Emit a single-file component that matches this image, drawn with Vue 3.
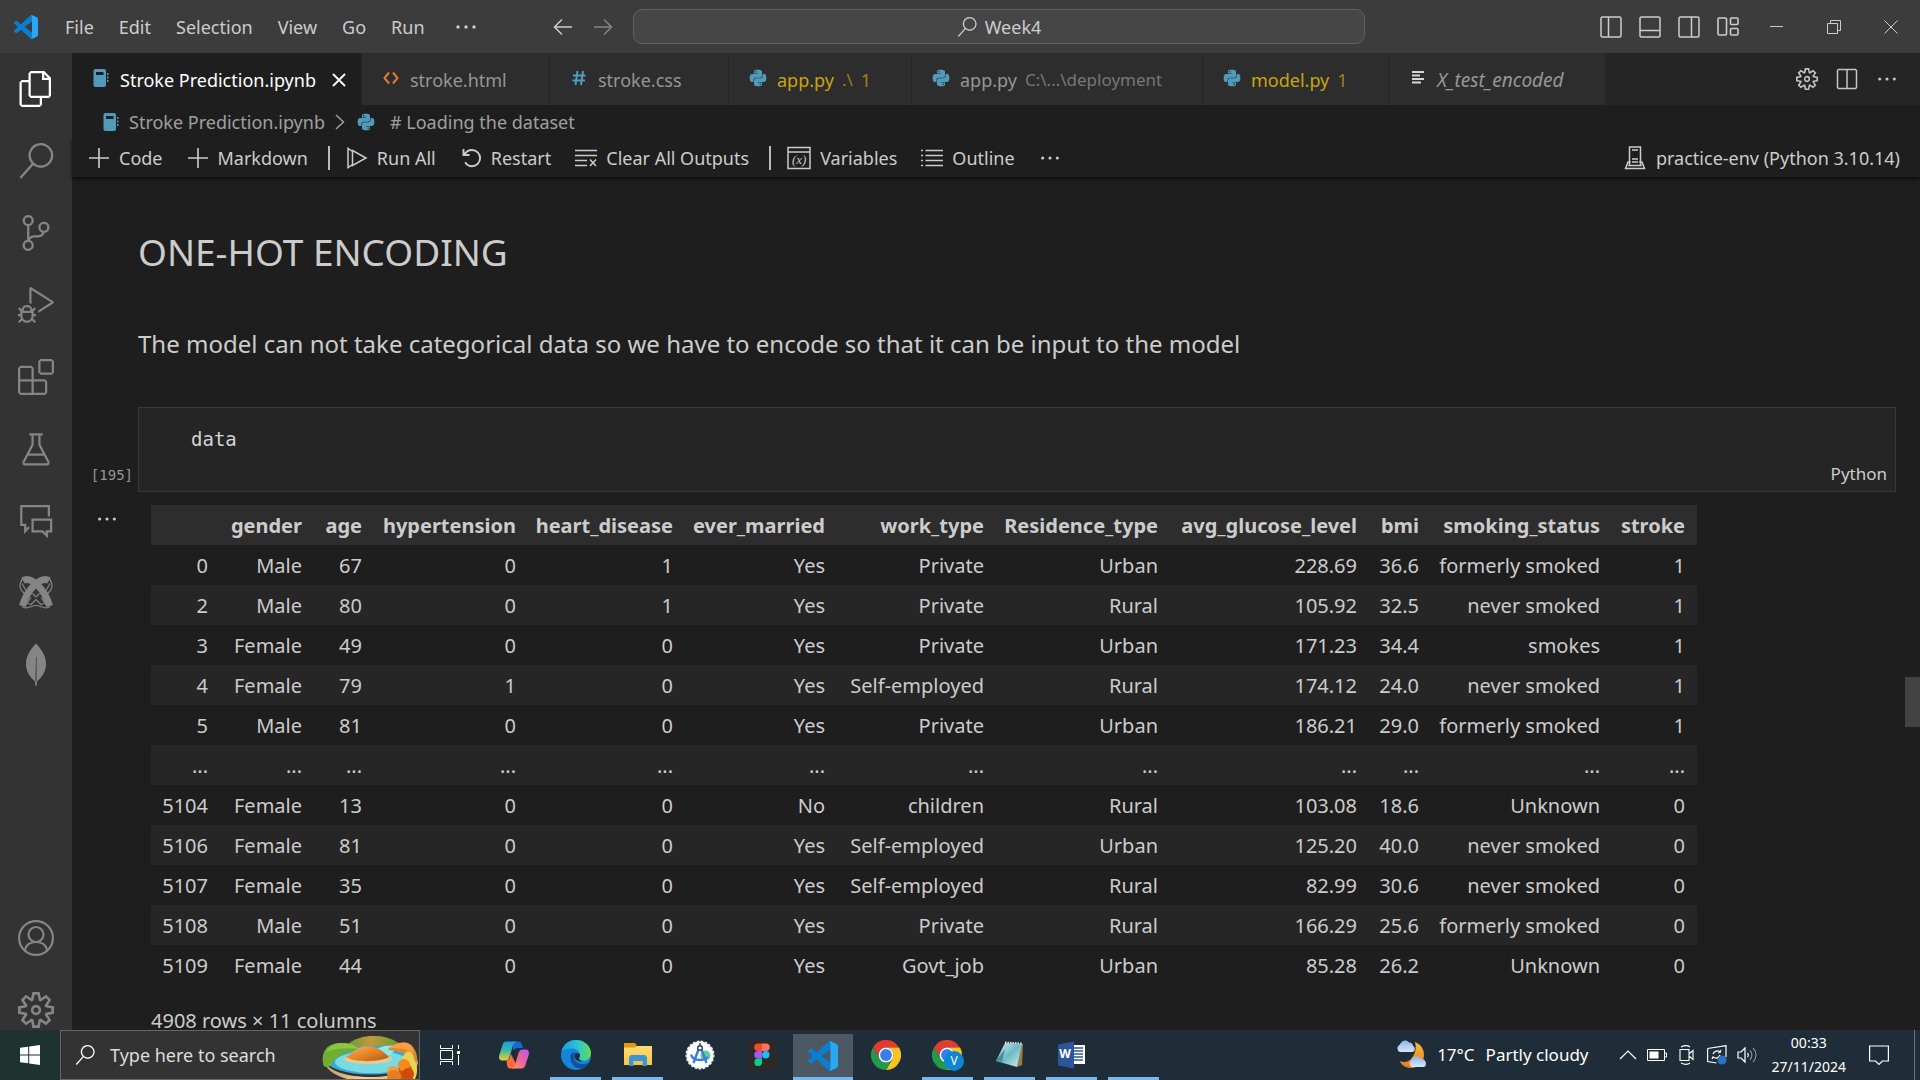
<script setup>
const menus = ['File', 'Edit', 'Selection', 'View', 'Go', 'Run']

const tabs = [
  { icon: 'notebook', name: 'Stroke Prediction.ipynb', kind: 'active' },
  { icon: 'html', name: 'stroke.html', kind: '' },
  { icon: 'css', name: 'stroke.css', kind: '' },
  { icon: 'python', name: 'app.py', note: '.\\', count: '1', kind: 'warn' },
  { icon: 'python', name: 'app.py', note: 'C:\\...\\deployment', kind: '' },
  { icon: 'python', name: 'model.py', count: '1', kind: 'warn' },
  { icon: 'lines', name: 'X_test_encoded', kind: 'preview' },
]

const activity = [
  ['files', 'Explorer'],
  ['search', 'Search'],
  ['scm', 'Source Control'],
  ['debug', 'Run and Debug'],
  ['extensions', 'Extensions'],
  ['flask', 'Testing'],
  ['chat', 'Comments'],
  ['ribbon', 'Ribbon'],
  ['leaf', 'MongoDB'],
]

const columns = ['', 'gender', 'age', 'hypertension', 'heart_disease', 'ever_married', 'work_type', 'Residence_type', 'avg_glucose_level', 'bmi', 'smoking_status', 'stroke']

const rows = [
  ['0', 'Male', '67', '0', '1', 'Yes', 'Private', 'Urban', '228.69', '36.6', 'formerly smoked', '1'],
  ['2', 'Male', '80', '0', '1', 'Yes', 'Private', 'Rural', '105.92', '32.5', 'never smoked', '1'],
  ['3', 'Female', '49', '0', '0', 'Yes', 'Private', 'Urban', '171.23', '34.4', 'smokes', '1'],
  ['4', 'Female', '79', '1', '0', 'Yes', 'Self-employed', 'Rural', '174.12', '24.0', 'never smoked', '1'],
  ['5', 'Male', '81', '0', '0', 'Yes', 'Private', 'Urban', '186.21', '29.0', 'formerly smoked', '1'],
  ['...', '...', '...', '...', '...', '...', '...', '...', '...', '...', '...', '...'],
  ['5104', 'Female', '13', '0', '0', 'No', 'children', 'Rural', '103.08', '18.6', 'Unknown', '0'],
  ['5106', 'Female', '81', '0', '0', 'Yes', 'Self-employed', 'Urban', '125.20', '40.0', 'never smoked', '0'],
  ['5107', 'Female', '35', '0', '0', 'Yes', 'Self-employed', 'Rural', '82.99', '30.6', 'never smoked', '0'],
  ['5108', 'Male', '51', '0', '0', 'Yes', 'Private', 'Rural', '166.29', '25.6', 'formerly smoked', '0'],
  ['5109', 'Female', '44', '0', '0', 'Yes', 'Govt_job', 'Urban', '85.28', '26.2', 'Unknown', '0'],
]

const apps = [
  { icon: 'copilot', name: 'Copilot', state: '' },
  { icon: 'edge', name: 'Edge', state: 'open' },
  { icon: 'explorer', name: 'File Explorer', state: 'open' },
  { icon: 'android', name: 'Android Studio', state: '' },
  { icon: 'figma', name: 'Figma', state: '' },
  { icon: 'vscode', name: 'Visual Studio Code', state: 'open focused' },
  { icon: 'chrome', name: 'Chrome', state: '' },
  { icon: 'chromev', name: 'Chrome profile', state: 'open', glyph: 'V' },
  { icon: 'notepad', name: 'Notepad', state: 'open' },
  { icon: 'word', name: 'Word', state: 'open', glyph: 'W' },
  { icon: 'blank', name: 'App', state: 'open' },
]
</script>

<template>
  <div class="desktop">
    <svg class="sprite" aria-hidden="true">
      <defs>
        <linearGradient id="gCopA" x1="0" y1="0" x2="0" y2="1"><stop offset="0" stop-color="#1b9be8" /><stop offset=".45" stop-color="#38b6a8" /><stop offset="1" stop-color="#e8d52c" /></linearGradient>
        <linearGradient id="gCopB" x1="1" y1="0" x2="0" y2="1"><stop offset="0" stop-color="#b45cf0" /><stop offset=".5" stop-color="#f0619c" /><stop offset="1" stop-color="#ff9a4d" /></linearGradient>
        <linearGradient id="gEdge" x1="0" y1="0" x2="1" y2="0"><stop offset="0" stop-color="#1d9be0" /><stop offset=".55" stop-color="#2fc3d0" /><stop offset="1" stop-color="#62df50" /></linearGradient>
        <linearGradient id="gFolder" x1="0" y1="0" x2="0" y2="1"><stop offset="0" stop-color="#ffdc72" /><stop offset="1" stop-color="#f7c741" /></linearGradient>
        <linearGradient id="gPad" x1="0" y1="0" x2="1" y2="1"><stop offset="0" stop-color="#d9f2f4" /><stop offset=".5" stop-color="#6dbac4" /><stop offset="1" stop-color="#d5eef0" /></linearGradient>
        <linearGradient id="gHill" x1="0" y1="0" x2="1" y2="0"><stop offset="0" stop-color="#5f9a2c" /><stop offset=".45" stop-color="#c09a3c" /><stop offset="1" stop-color="#5d9c2d" /></linearGradient>
        <linearGradient id="gSand" x1="0" y1="0" x2="1" y2="0"><stop offset="0" stop-color="#b89a6a" /><stop offset=".4" stop-color="#f2d09a" /><stop offset="1" stop-color="#d9b274" /></linearGradient>
        <linearGradient id="gOrange" x1="0" y1="0" x2="1" y2="1"><stop offset="0" stop-color="#ffb25a" /><stop offset=".6" stop-color="#e07c20" /><stop offset="1" stop-color="#a05a20" /></linearGradient>
        <linearGradient id="gMoon" x1="0" y1="0" x2="0" y2="1"><stop offset="0" stop-color="#f4b93a" /><stop offset="1" stop-color="#ea7a1e" /></linearGradient>
        <linearGradient id="gCloud" x1="0" y1="0" x2="0" y2="1"><stop offset="0" stop-color="#8fb4ee" /><stop offset="1" stop-color="#d8e6fb" /></linearGradient>
      </defs>

      <symbol id="vscode" viewBox="0 0 24 24">
        <path fill="#0a7fcf" d="M23.15 2.587L18.21.21a1.494 1.494 0 0 0-1.705.29l-9.46 8.63-4.12-3.128a.999.999 0 0 0-1.276.057L.327 7.261A1 1 0 0 0 .326 8.74L3.899 12 .326 15.26a1 1 0 0 0 .001 1.479L1.65 17.94a.999.999 0 0 0 1.276.057l4.12-3.128 9.46 8.63a1.492 1.492 0 0 0 1.704.29l4.942-2.377A1.5 1.5 0 0 0 24 20.06V3.939a1.5 1.5 0 0 0-.85-1.352zm-5.146 14.861L10.826 12l7.178-5.448v10.896z" />
        <path fill="#2aa7f2" d="M18 .2l5.15 2.387.85 1.352V20.06l-.85 1.352L18 23.8l-1-.2 1-1.2V1.6L17 .4z" />
      </symbol>
      <symbol id="files" viewBox="0 0 24 24"><path fill="currentColor" d="M17.5 0h-9L7 1.5V6H2.5L1 7.5v15.07L2.5 24h12.07L16 22.57V18h4.7l1.3-1.43V4.5L17.5 0zm0 2.12l2.38 2.38H17.5V2.12zm-3 20.38h-12v-15H7v9.07L8.5 18h6v4.5zm6-6h-12v-15H16V6h4.5v10.5z" /></symbol>
      <symbol id="search" viewBox="0 0 24 24"><path fill="currentColor" d="M15.25 0a8.25 8.25 0 0 0-6.18 13.72L1 22.88l1.12 1 8.05-9.12A8.251 8.251 0 1 0 15.25.01V0zm0 15a6.75 6.75 0 1 1 0-13.5 6.75 6.75 0 0 1 0 13.5z" /></symbol>
      <symbol id="scm" viewBox="0 0 24 24"><path fill="currentColor" d="M21.007 8.222A3.738 3.738 0 0 0 15.045 5.2a3.737 3.737 0 0 0 1.156 6.583 2.988 2.988 0 0 1-2.668 1.67h-2.99a4.456 4.456 0 0 0-2.989 1.165V7.4a3.737 3.737 0 1 0-1.494 0v9.117a3.776 3.776 0 1 0 1.816.099 2.99 2.99 0 0 1 2.668-1.667h2.99a4.484 4.484 0 0 0 4.223-3.039 3.736 3.736 0 0 0 3.25-3.687zM4.565 3.738a2.242 2.242 0 1 1 4.484 0 2.242 2.242 0 0 1-4.484 0zm4.484 16.441a2.242 2.242 0 1 1-4.484 0 2.242 2.242 0 0 1 4.484 0zm8.221-9.715a2.242 2.242 0 1 1 0-4.485 2.242 2.242 0 0 1 0 4.485z" /></symbol>
      <symbol id="debug" viewBox="0 0 24 24"><path fill="currentColor" d="M10.94 13.5l-1.32 1.32a3.73 3.73 0 0 0-7.24 0L1.06 13.5 0 14.56l1.72 1.72-.22.22V18H0v1.5h1.5v.08c.077.489.214.966.41 1.42L0 22.94 1.06 24l1.65-1.65A4.308 4.308 0 0 0 6 24a4.31 4.31 0 0 0 3.29-1.65L10.94 24 12 22.94 10.09 21c.198-.464.336-.951.41-1.45v-.1H12V18h-1.5v-1.5l-.22-.22L12 14.56l-1.06-1.06zM6 13.5a2.25 2.25 0 0 1 2.25 2.25h-4.5A2.25 2.25 0 0 1 6 13.5zm3 6a3.33 3.33 0 0 1-3 3 3.33 3.33 0 0 1-3-3v-2.25h6v2.25zm14.76-9.9v1.26L13.5 17.37V15.6l8.5-5.37L9 2v9.46a5.07 5.07 0 0 0-1.5-.72V.63L8.64 0l15.12 9.6z" /></symbol>
      <symbol id="extensions" viewBox="0 0 24 24"><path fill="currentColor" d="M13.5 1.5L15 0h7.5L24 1.5V9l-1.5 1.5H15L13.5 9V1.5zm1.5 0V9h7.5V1.5H15zM0 15V6l1.5-1.5H9L10.5 6v7.5H18l1.5 1.5v7.5L18 24H1.5L0 22.5V15zm9-1.5V6H1.5v7.5H9zM9 15H1.5v7.5H9V15zm1.5 7.5H18V15h-7.5v7.5z" /></symbol>
      <symbol id="flask" viewBox="0 0 24 24"><path fill="none" stroke="currentColor" stroke-width="1.5" d="M7.5 2.2h9M9.7 2.2v7L3.8 20.5c-.4 1 .1 1.8 1 1.8h14.4c.9 0 1.4-.8 1-1.8L14.3 9.2v-7M6.8 15.8h10.4" /></symbol>
      <symbol id="chat" viewBox="0 0 24 24"><path fill="none" stroke="currentColor" stroke-width="1.5" d="M20.6 9V2.1H2.2v12.5h2.6v4.2l2.6-2.7M9.7 11.1h12.4v7.8h-2.900v2.800l-2.900-2.800H9.700z" /></symbol>
      <symbol id="ribbon" viewBox="0 0 36 36">
        <g fill="none" stroke="currentColor">
          <path stroke-width="7" d="M5 5.500C13 1 27 14 31.500 31M31 5.500C23 1 9 14 4.500 31" />
          <path stroke-width="1.200" d="M5 3.500C0 9 1.500 15.500 8 19.500M31 3.500c5 5.500 3.500 12-3 16M4 31.500c5 4 9-1 14-1s9 5 14 1M13 22.500l-4 5.500 4 1.500 5-5 5 5 4-1.500-4-5.500M14.500 18.500l3.500 3.500 3.500-3.500M4 8.500l4 7M32 8.500l-4 7" />
        </g>
      </symbol>
      <symbol id="leaf" viewBox="0 0 36 44">
        <path fill="currentColor" d="M18 .5C13 6 8 12 8 21c0 7.500 4 13 9 17.500l.4 4.500h1.200l.4-4.500c5-4.500 9-10 9-17.500C28 12 23 6 18 .5z" />
        <path fill="#4a4a4a" d="M17.900 14h.8v24h-1.400z" />
      </symbol>
      <symbol id="account" viewBox="0 0 36 36"><g fill="none" stroke="currentColor" stroke-width="2.200"><circle cx="18" cy="18" r="16.900" /><circle cx="18" cy="14.500" r="7.500" /><path d="M7 30c1-5 5-8 11-8s10 3 11 8" /></g></symbol>
      <symbol id="gear" viewBox="0 0 24 24"><path fill="currentColor" d="M19.850 8.750l4.150.830v4.840l-4.150.830 2.350 3.520-3.430 3.430-3.520-2.350-.830 4.150H9.580l-.830-4.150-3.520 2.350-3.430-3.430 2.350-3.520L0 14.420V9.580l4.150-.830L1.800 5.230 5.230 1.800l3.520 2.350L9.580 0h4.840l.830 4.150 3.520-2.350 3.430 3.430-2.350 3.520zm-1.570 5.070l4-.810v-2l-4-.810-.540-1.300 2.290-3.430-1.430-1.430-3.430 2.290-1.300-.540-.810-4h-2l-.810 4-1.300.540-3.430-2.290-1.430 1.430L6.380 8.900l-.540 1.300-4 .810v2l4 .810.540 1.300-2.290 3.430 1.430 1.430 3.430-2.290 1.300.540.810 4h2l.810-4 1.300-.540 3.430 2.290 1.430-1.430-2.290-3.430.540-1.300zm-8.186-4.672A3.430 3.430 0 0 1 12 8.570 3.440 3.440 0 0 1 15.430 12a3.430 3.430 0 1 1-5.336-2.852zm.956 4.274c.281.188.612.288.950.288A1.700 1.700 0 0 0 13.710 12a1.710 1.710 0 1 0-2.660 1.422z" /></symbol>
      <symbol id="python" viewBox="-1 -1 26 26"><path fill="#519aba" d="M14.250.180l.9.200.730.260.590.300.450.320.340.340.250.340.160.330.100.300.040.260.020.200-.010.130V8.500l-.050.630-.130.550-.210.460-.260.380-.300.310-.330.250-.350.190-.350.140-.330.100-.300.070-.260.040-.210.020H8.770l-.690.050-.590.140-.500.220-.410.270-.330.320-.270.350-.200.360-.150.370-.100.350-.070.320-.040.270-.020.210v3.060H3.170l-.210-.030-.280-.070-.320-.120-.350-.180-.360-.260-.360-.360-.350-.460-.320-.590-.280-.730-.210-.880-.140-1.050-.050-1.230.060-1.220.160-1.040.240-.870.320-.710.360-.570.400-.440.420-.330.420-.240.400-.160.360-.100.320-.050.240-.010h.160l.060.010h8.160v-.830H6.180l-.010-2.750-.020-.370.050-.340.110-.310.170-.280.250-.260.310-.230.380-.200.440-.180.510-.150.580-.120.640-.100.710-.060.770-.040.840-.020 1.270.050zm-6.300 1.980l-.230.330-.080.410.080.410.230.340.330.220.410.090.410-.090.330-.220.230-.340.080-.410-.080-.410-.230-.330-.330-.220-.410-.090-.410.090zm13.090 3.950l.280.060.320.120.350.180.360.270.360.350.350.470.320.590.280.730.210.880.140 1.040.050 1.230-.060 1.230-.160 1.040-.240.860-.320.710-.360.570-.400.450-.420.330-.420.240-.400.160-.360.090-.320.050-.240.020-.160-.010h-8.220v.820h5.840l.010 2.760.020.360-.050.340-.110.310-.170.290-.250.250-.310.240-.380.200-.440.170-.510.150-.580.130-.640.090-.710.070-.770.040-.840.010-1.270-.040-1.070-.140-.900-.200-.730-.250-.590-.300-.450-.330-.340-.340-.250-.340-.160-.330-.100-.300-.040-.250-.020-.200.010-.130v-5.340l.050-.640.130-.540.210-.460.260-.380.300-.320.330-.240.350-.200.350-.140.330-.100.300-.060.260-.040.210-.020.130-.010h5.840l.690-.050.590-.140.500-.210.410-.280.330-.320.270-.350.200-.360.150-.360.100-.350.070-.320.040-.280.020-.210V6.070h2.090l.140.010zm-6.470 14.250l-.230.330-.080.410.080.410.230.330.330.230.410.080.410-.080.330-.230.230-.330.080-.410-.080-.410-.230-.330-.330-.230-.410-.080-.410.080z" /></symbol>
      <symbol id="notebook" viewBox="0 0 18 18"><path fill="#519aba" fill-rule="evenodd" d="M3.500 0h8.500a2 2 0 0 1 2 2v14a2 2 0 0 1-2 2H3.500a2 2 0 0 1-2-2V2a2 2 0 0 1 2-2zM4 3v3h7.500V3zM15 4h1.500v2H15zm0 3.500h1.500v2H15zM15 11h1.500v2H15z" /></symbol>
      <symbol id="html" viewBox="0 0 18 18"><path fill="none" stroke="#e37933" stroke-width="2" d="M7 3.500L2.500 9 7 14.500M11 3.500L15.500 9 11 14.500" /></symbol>
      <symbol id="css" viewBox="0 0 18 18"><path fill="none" stroke="#519aba" stroke-width="2" d="M7.500 2l-2 14M13 2l-2 14M3 6.500h12.500M2.500 11.500H15" /></symbol>
      <symbol id="lines" viewBox="0 0 18 18"><path fill="none" stroke="#d4d7d6" stroke-width="2" d="M3 3h12M3 6.500h8M3 10h12M3 13.500h9" /></symbol>
      <symbol id="close" viewBox="0 0 18 18"><path fill="none" stroke="currentColor" stroke-width="1.800" d="M3 3l12 12M15 3L3 15" /></symbol>
      <symbol id="dots" viewBox="0 0 24 24"><g fill="currentColor"><circle cx="4" cy="12" r="1.700" /><circle cx="12" cy="12" r="1.700" /><circle cx="20" cy="12" r="1.700" /></g></symbol>
      <symbol id="left" viewBox="0 0 20 20"><path fill="none" stroke="currentColor" stroke-width="1.500" d="M9 2.500L1.500 10 9 17.500M1.500 10H19" /></symbol>
      <symbol id="right" viewBox="0 0 20 20"><path fill="none" stroke="currentColor" stroke-width="1.500" d="M11 2.500l7.500 7.500-7.500 7.500M18.500 10H1" /></symbol>
      <symbol id="paneL" viewBox="0 0 22 22"><path fill="none" stroke="currentColor" stroke-width="1.500" d="M2 1h18l1 1v18l-1 1H2l-1-1V2zM8.500 1v20" /></symbol>
      <symbol id="paneB" viewBox="0 0 22 22"><path fill="none" stroke="currentColor" stroke-width="1.500" d="M2 1h18l1 1v18l-1 1H2l-1-1V2zM1 14.500h20" /></symbol>
      <symbol id="paneR" viewBox="0 0 22 22"><path fill="none" stroke="currentColor" stroke-width="1.500" d="M2 1h18l1 1v18l-1 1H2l-1-1V2zM13.500 1v20" /></symbol>
      <symbol id="layout" viewBox="0 0 22 22"><g fill="none" stroke="currentColor" stroke-width="1.600"><rect x="1" y="2" width="8.500" height="17" rx="1" /><rect x="13.500" y="2" width="7.500" height="6.500" rx="1" /><rect x="13.500" y="12.500" width="7.500" height="6.500" rx="1" /></g></symbol>
      <symbol id="split" viewBox="0 0 22 22"><path fill="none" stroke="currentColor" stroke-width="1.500" d="M2.500 1.500h17l1 1v17l-1 1h-17l-1-1v-17zM11 1.500v19" /></symbol>
      <symbol id="min" viewBox="0 0 14 14"><path stroke="currentColor" d="M0 6.500h13" /></symbol>
      <symbol id="restore" viewBox="0 0 14 14"><path fill="none" stroke="currentColor" d="M.5 3.500h10v10H.5zM3.500 3.500v-3h10v10h-3" /></symbol>
      <symbol id="winx" viewBox="0 0 14 14"><path stroke="currentColor" d="M.5.500l13 13M13.500.500L.5 13.500" /></symbol>
      <symbol id="plus" viewBox="0 0 22 22"><path stroke="currentColor" stroke-width="1.600" d="M11 1v20M1 11h20" /></symbol>
      <symbol id="runall" viewBox="0 0 22 22"><path fill="none" stroke="currentColor" stroke-width="1.500" d="M6.500 4.500L2 1.500v19l4.500-3M6.500 3.500L20 11 6.500 18.500z" /></symbol>
      <symbol id="restart" viewBox="0 0 22 22"><path fill="none" stroke="currentColor" stroke-width="1.900" d="M3.500 2v6h6M4 7.800C6 4.800 8.500 3 12 3a8 8 0 0 1 0 16.200c-3 0-5.500-1.700-6.800-4" /></symbol>
      <symbol id="clear" viewBox="0 0 22 22"><path fill="none" stroke="currentColor" stroke-width="1.500" d="M0 3.500h22M0 8.500h22M0 13.500h12M0 18.500h12M15 12.500l6 6.500M21 12.500L15 19" /></symbol>
      <symbol id="vars" viewBox="0 0 24 24"><path fill="none" stroke="currentColor" stroke-width="1.500" d="M1 1.500h22V22.500H1zM1 6h22" /></symbol>
      <symbol id="outline" viewBox="0 0 22 22"><path fill="none" stroke="currentColor" stroke-width="1.500" d="M0 3.500h2M4.500 3.500H22M0 8.500h2M4.500 8.500H22M0 13.500h2M4.500 13.500H22M0 18.500h2M4.500 18.500H22" /></symbol>
      <symbol id="kernel" viewBox="0 0 22 24"><path fill="none" stroke="currentColor" stroke-width="1.500" d="M5.500 16V1h11v15M4 16h2l-1 3.500h12L16 16h2l2.500 6.500h-19zM8 4h6M8 13h6M8 16h6" /></symbol>
      <symbol id="chev" viewBox="0 0 12 20"><path fill="none" stroke="currentColor" stroke-width="1.500" d="M2 3l7.500 7L2 17" /></symbol>

      <symbol id="winlogo" viewBox="0 0 20 20"><path fill="#fff" d="M0 2.800l8.200-1.100v7.800H0zM9.200 1.500L20 0v9.500H9.200zM0 10.500h8.200v7.800L0 17.200zM9.200 10.500H20V20L9.200 18.500z" /></symbol>
      <symbol id="taskview" viewBox="0 0 20 20"><path fill="none" stroke="#fff" stroke-width="1" d="M.5 0v3.500h12V0M.5 5.500h12v9H.5zM.5 20v-3.500h12V20M18.500 0v4M18.500 10v10" /><path fill="#fff" d="M17 6h3v3h-3z" /></symbol>
      <symbol id="island" viewBox="0 0 97 44">
        <path fill="#5d9c2d" d="M20 16C28 4 44 1 52 1s24 4 30 13l-14 8H30z" />
        <path fill="url(#gHill)" d="M22 12C32 3 42 1 52 1s22 3 29 11l-18 6-24-2z" />
        <path fill="url(#gSand)" d="M2 24c3 12 22 18 47 18s42-8 46-18l1 4c-3 12-22 19-47 19S2 38 2 24z" />
        <ellipse cx="49" cy="25" rx="45" ry="14.500" fill="#3aa7d4" />
        <ellipse cx="50" cy="27" rx="37" ry="11" fill="#78dbe4" />
        <path fill="#8fe8ee" d="M24 10l22 7 16-6 16-1-10 10-34-1z" />
        <path fill="#6fae35" d="M1 28C-1 16 6 8 18 8c10 0 16 3 20 7-12 1-24 5-30 16-4 2-7 1-7-3z" />
        <path fill="#8dc53f" d="M4 17C8 10 14 8 20 8c8 0 13 2 17 6-14-2-25 0-33 3z" />
        <path fill="#d98b2b" d="M66 15c4-6 16-9 22-6 5 4 8 10 7 19-6-8-16-12-29-13z" />
        <path fill="#ff9d45" d="M68 13c5-5 14-7 19-4 3 2 4 5 5 9-7-4-15-5-24-5z" />
        <ellipse cx="46" cy="24" rx="24" ry="5" fill="#e9c98e" />
        <path fill="url(#gOrange)" d="M24 22c5-3 12-11 21-11 11 0 17 6 22 11-8 5-34 6-43 0z" />
        <path fill="#e8d352" d="M80 24c4-12 12-8 12 0 4 6 4 14 1 20H78z" />
        <path fill="#d9580c" d="M76 44c-2-14 4-18 7-18 5 2 9 8 8 18z" />
        <circle cx="82" cy="30" r="6" fill="#f28a1d" /><circle cx="71" cy="37" r="6" fill="#f49a3c" /><circle cx="72" cy="42" r="7" fill="#e5801f" /><circle cx="86" cy="39" r="6" fill="#d04a08" />
      </symbol>
      <symbol id="copilot" viewBox="0 0 30 30">
        <path fill="#1668d8" d="M14 1.500h5.500c2 0 3 1.500 3.500 3.500l1 3h-6l-4 2z" />
        <path fill="url(#gCopA)" d="M8 1.500h9c-2 1-3 3-3.700 6L10.500 17c-.8 2.500-2 3.500-4.500 3.500H3C.5 20.500-.5 18 .3 15L3.500 5C4.300 2.500 5.500 1.500 8 1.500z" />
        <path fill="#ff6b3d" d="M7.500 20.500c2-.3 3-1.500 3.500-3.500l1-3 5 10-1.500 4.500H11c-2 0-2.500-1.500-3-3.500z" />
        <path fill="url(#gCopB)" d="M22 28.500h-9c2-1 3-3 3.700-6l2.800-9.500c.8-2.500 2-3.500 4.500-3.500h3c2.500 0 3.500 2.500 2.700 5.500L26.500 25c-.8 2.500-2 3.500-4.500 3.500z" />
      </symbol>
      <symbol id="edge" viewBox="0 0 30 30">
        <circle cx="15" cy="15" r="15" fill="#1485d8" />
        <path fill="url(#gEdge)" d="M.3 12C2 4 8 0 15 0c9 0 15 6.500 15 13 0 5-4 8-8 8-3 0-4.500-1.500-4-3 .8-1.200 1.200-2 1-3.500C18 10.500 14.500 8.500 11 8.500 6 8.500 2 10 .3 12z" />
        <path fill="#124f9c" d="M9.500 15.500c-1 7 4 14 12 13 3-1 6-4 7-6.500-3 2-6 2.300-9 1.800-5-.8-7-4-6.500-8.300.2-1.500 1-2.500 2-3.200-3-.3-5 1-5.500 3.200z" />
        <path fill="#1f2d38" d="M16 13c2 0 3 1 3 2.500S18 17.500 18 18.500c.3 2 3 2.500 5 2.300-5 1.700-9-.3-9.500-4C13.300 15 14 13 16 13z" />
      </symbol>
      <symbol id="explorer" viewBox="0 0 30 30"><path fill="#dd9a0c" d="M1 3h11l2 3v4H1z" /><path fill="url(#gFolder)" d="M1 7.500h11l2.500-1.500H29v19H1z" /><path fill="#3b93dc" d="M6 26V17l2-2h14l2 2v9h-4.500v-5h-9v5z" /><path fill="#f3c53c" d="M10.500 21h9v4h-9z" /></symbol>
      <symbol id="android" viewBox="0 0 30 30"><circle cx="15" cy="15" r="13.500" fill="#fff" stroke="#e9edf2" stroke-width="2" stroke-dasharray="2.500 1.500" /><circle cx="20.500" cy="15.500" r="5" fill="#5fd18c" /><path fill="none" stroke="#3f7be6" stroke-width="2.400" d="M13.500 9.500L8.500 23M16.500 9.500L21.500 23M6 14.500c1 4 5 5.500 9 5.500s6-1 8-3" /><circle cx="15" cy="8" r="2.300" fill="#fff" stroke="#2d4052" stroke-width="1.400" /><path stroke="#2d4052" stroke-width="1.400" d="M15 3v3" /></symbol>
      <symbol id="figma" viewBox="0 0 30 30"><path fill="#2c2a29" d="M0 0h30v30H0z" /><path fill="#f24e1e" d="M15 3.500h-4a3.700 3.700 0 0 0 0 7.500h4z" /><path fill="#ff7262" d="M15 3.500h4a3.700 3.700 0 0 1 0 7.500h-4z" /><path fill="#a259ff" d="M15 11h-4a3.700 3.700 0 0 0 0 7.500h4z" /><circle cx="18.800" cy="14.800" r="3.700" fill="#1abcfe" /><path fill="#0acf83" d="M15 18.500h-4a3.800 3.800 0 1 0 4 3.800z" /></symbol>
      <symbol id="chrome" viewBox="0 0 30 30"><path fill="#e33b2e" d="M2 7.500A15 15 0 0 1 28 7.500H15A7.500 7.500 0 0 0 8.500 19z" /><path fill="#fcc31e" d="M28 7.500A15 15 0 0 1 15 30l6.500-11.300A7.500 7.500 0 0 0 15 7.500z" /><path fill="#229a4a" d="M15 30A15 15 0 0 1 2 7.500l6.500 11.200A7.500 7.500 0 0 0 21.500 18.700z" /><circle cx="15" cy="15" r="7.500" fill="#fff" /><circle cx="15" cy="15" r="5.900" fill="#3b7ded" /></symbol>
      <symbol id="chromev" viewBox="0 0 32 32"><use href="#chrome" x="0" y="1" width="30" height="30" /><circle cx="22" cy="22" r="10" fill="#0f86cf" /></symbol>
      <symbol id="notepad" viewBox="0 0 30 30"><path fill="#9c7a45" d="M26 3l2 1-1 21-5 2z" /><path fill="url(#gPad)" d="M10 3l17 1-5 23L1 21z" /><path fill="#2f7884" d="M1 20.500L10 9l-3 13z" opacity=".7" /><path stroke="#dfe3e4" stroke-width="2" stroke-dasharray="1.500 1" d="M10 2.500l17 1" /></symbol>
      <symbol id="word" viewBox="0 0 30 30"><path fill="#fff" d="M15 5h13v19H15z" /><path stroke="#2b579a" stroke-width="1.300" d="M17 8h9M17 11h9M17 14h9M17 17h9M17 20h9" /><path fill="#2b579a" d="M1 4.500L17 1.500v27L1 25.500z" /></symbol>
      <symbol id="blank" viewBox="0 0 30 30"></symbol>
      <symbol id="weather" viewBox="0 0 30 30"><path fill="url(#gMoon)" d="M19 2c7 3 9 8 9 13 0 8-6 13-13 13-5 0-9-2.500-11.500-7 5 2 10 1 13-4 3-4 4-9 2.500-15z" /><path fill="url(#gCloud)" d="M4 12a4 4 0 0 1 0-7.500C5 1 10-1.500 13 2.500c3 0 4 2 4 3.500 3 1.500 2 6-1 6z" /><path fill="url(#gCloud)" d="M16 27a4 4 0 0 1-.5-7c1-4 6-5 8.500-1.500 3 0 6 2 6 5s-2 3.500-3 3.500z" /></symbol>
      <symbol id="up" viewBox="0 0 18 18"><path fill="none" stroke="#fff" stroke-width="1.200" d="M1 13l8-8 8 8" /></symbol>
      <symbol id="battery" viewBox="0 0 20 20"><path fill="none" stroke="#fff" d="M.5 4.500h17v11H.5zM17.500 8h2v4h-2" /><path fill="#fff" d="M2.500 6.500h9v7h-9z" /></symbol>
      <symbol id="camera" viewBox="0 0 20 20"><path fill="none" stroke="#fff" stroke-width="1.100" d="M3 4.500h9v11H3zM12 9l4-3.500v9L12 11M4 2c3-1.500 7-1.500 9 0M4 18c3 1.500 7 1.500 9 0" /></symbol>
      <symbol id="update" viewBox="0 0 20 20"><path fill="none" stroke="#fff" stroke-width="1.200" d="M.6 3.500L19 .6V12M.6 3.500v13l9 1.500M6 9c1-3 5-4 7-2l1-2M14 7l-3 1M13 10c-1 3-4 4-7 2l-1 2" /><circle cx="15" cy="15" r="4.500" fill="#2a72c4" /></symbol>
      <symbol id="speaker" viewBox="0 0 20 20"><path fill="none" stroke="#fff" stroke-width="1.200" d="M1 7h3l4-4v14l-4-4H1zM10.500 8c1 1 1 3 0 4" /><path fill="none" stroke="#8b959b" stroke-width="1.100" d="M13 5.500c2.500 2.500 2.500 6.500 0 9M16 3c4 4 4 10 0 14" /></symbol>
      <symbol id="notify" viewBox="0 0 20 20"><path fill="none" stroke="#fff" stroke-width="1.200" d="M.6 1h18.800v15h-6l-3.400 3.400L6.600 16h-6z" /></symbol>
    </svg>

    <header class="titlebar">
      <svg class="s24 logo"><use href="#vscode" /></svg>
      <nav class="menus">
        <button v-for="m in menus" :key="m">{{ m }}</button>
        <button aria-label="More"><svg class="s24"><use href="#dots" /></svg></button>
      </nav>
      <div class="history">
        <button aria-label="Back"><svg class="s20"><use href="#left" /></svg></button>
        <button aria-label="Forward" class="off"><svg class="s20"><use href="#right" /></svg></button>
      </div>
      <button class="command"><svg class="s20"><use href="#search" /></svg>Week4</button>
      <div class="layouts">
        <button aria-label="Toggle side bar"><svg class="s22"><use href="#paneL" /></svg></button>
        <button aria-label="Toggle panel"><svg class="s22"><use href="#paneB" /></svg></button>
        <button aria-label="Toggle secondary side bar"><svg class="s22"><use href="#paneR" /></svg></button>
        <button aria-label="Customize layout"><svg class="s22"><use href="#layout" /></svg></button>
      </div>
      <div class="window">
        <button aria-label="Minimize"><svg class="s14"><use href="#min" /></svg></button>
        <button aria-label="Restore"><svg class="s14"><use href="#restore" /></svg></button>
        <button aria-label="Close"><svg class="s14"><use href="#winx" /></svg></button>
      </div>
    </header>

    <div class="workbench">
      <aside class="activity">
        <button v-for="([id, label], i) in activity" :key="id" :aria-label="label" :class="{ current: i === 0 }">
          <svg :class="id === 'leaf' ? 'tall' : 's36'"><use :href="'#' + id" /></svg>
        </button>
        <button class="account" aria-label="Accounts"><svg class="s36"><use href="#account" /></svg></button>
        <button aria-label="Manage"><svg class="s36"><use href="#gear" /></svg></button>
      </aside>

      <main class="editor">
        <div class="tabbar">
          <div class="tabs">
            <button v-for="(t, i) in tabs" :key="i" class="tab" :class="t.kind">
              <svg class="s18 file"><use :href="'#' + t.icon" /></svg>
              <span class="name">{{ t.name }}</span>
              <span v-if="t.note" class="note">{{ t.note }}</span>
              <span v-if="t.count" class="note count">{{ t.count }}</span>
              <svg v-if="t.kind === 'active'" class="s18 shut"><use href="#close" /></svg>
            </button>
          </div>
          <div class="actions">
            <button aria-label="Notebook settings"><svg class="s22"><use href="#gear" /></svg></button>
            <button aria-label="Split editor"><svg class="s22"><use href="#split" /></svg></button>
            <button aria-label="More actions"><svg class="s22"><use href="#dots" /></svg></button>
          </div>
        </div>

        <div class="crumbs">
          <svg class="s18"><use href="#notebook" /></svg>
          <a href="#">Stroke Prediction.ipynb</a>
          <svg class="chev"><use href="#chev" /></svg>
          <svg class="s18 py"><use href="#python" /></svg>
          <a href="#"># Loading the dataset</a>
        </div>

        <div class="toolbar">
          <button><svg class="s22"><use href="#plus" /></svg>Code</button>
          <button><svg class="s22"><use href="#plus" /></svg>Markdown</button>
          <i class="bar"></i>
          <button><svg class="s22"><use href="#runall" /></svg>Run All</button>
          <button><svg class="s22"><use href="#restart" /></svg>Restart</button>
          <button><svg class="s22"><use href="#clear" /></svg>Clear All Outputs</button>
          <i class="bar"></i>
          <button><span class="vars"><svg class="s24"><use href="#vars" /></svg><i>(x)</i></span>Variables</button>
          <button><svg class="s22"><use href="#outline" /></svg>Outline</button>
          <button aria-label="More"><svg class="s22"><use href="#dots" /></svg></button>
          <button class="kernel"><svg class="s24"><use href="#kernel" /></svg>practice-env (Python 3.10.14)</button>
        </div>

        <div class="notebook">
          <section class="sheet">
            <h1>ONE-HOT ENCODING</h1>
            <p class="prose">The model can not take categorical data so we have to encode so that it can be input to the model</p>
            <div class="cell">
              <span class="exec">[195]</span>
              <div class="code">
                <code>data</code>
                <span class="lang">Python</span>
              </div>
            </div>
            <div class="output">
              <button class="more" aria-label="Output actions"><svg class="s22"><use href="#dots" /></svg></button>
              <div>
                <table>
                  <colgroup><col v-for="c in 12" :key="c" :class="'c' + c" /></colgroup>
                  <thead><tr><th v-for="c in columns" :key="c" scope="col">{{ c }}</th></tr></thead>
                  <tbody>
                    <tr v-for="r in rows" :key="r[0]"><td v-for="(v, i) in r" :key="i">{{ v }}</td></tr>
                  </tbody>
                </table>
                <p class="shape">4908 rows × 11 columns</p>
              </div>
            </div>
          </section>
          <div class="rail"><div class="thumb"></div></div>
        </div>
      </main>
    </div>

    <footer class="taskbar">
      <button class="start" aria-label="Start"><svg class="s20"><use href="#winlogo" /></svg></button>
      <label class="find">
        <svg class="s20"><use href="#search" /></svg>
        <input type="text" placeholder="Type here to search" aria-label="Type here to search" />
        <svg class="art"><use href="#island" /></svg>
      </label>
      <button class="view" aria-label="Task view"><svg class="s20"><use href="#taskview" /></svg></button>
      <button v-for="a in apps" :key="a.icon" class="app" :class="a.state" :aria-label="a.name">
        <svg :class="a.icon === 'chromev' ? 's32' : 's30'"><use :href="'#' + a.icon" /></svg>
        <span v-if="a.glyph" class="glyph" :class="a.icon">{{ a.glyph }}</span>
      </button>
      <button class="weather"><svg class="s30"><use href="#weather" /></svg><span>17°C</span><span>Partly cloudy</span></button>
      <div class="tray">
        <svg class="s18"><use href="#up" /></svg>
        <svg class="s20"><use href="#battery" /></svg>
        <svg class="s20"><use href="#camera" /></svg>
        <svg class="s20"><use href="#update" /></svg>
        <svg class="s20"><use href="#speaker" /></svg>
      </div>
      <div class="clock"><span>00:33</span><span>27/11/2024</span></div>
      <button class="notify" aria-label="Notifications"><svg class="s20"><use href="#notify" /></svg></button>
    </footer>
  </div>
</template>

<style>
body {
  margin: 0;
  background: #1e1e1e;
}
</style>

<style scoped>
* {
  box-sizing: border-box;
}
.desktop {
  display: flex;
  flex-direction: column;
  height: 100vh;
  overflow: hidden;
  background: #1e1e1e;
  color: #ccc;
  font-family: "Noto Sans", "Open Sans", sans-serif;
  font-size: 18px;
  line-height: 24px;
  white-space: nowrap;
}
button {
  display: flex;
  align-items: center;
  padding: 0;
  border: 0;
  background: none;
  color: inherit;
  font: inherit;
}
a {
  color: inherit;
  text-decoration: none;
}
svg {
  flex: none;
}
.sprite {
  position: absolute;
  width: 0;
  height: 0;
}
.s14 { width: 14px; height: 14px; }
.s18 { width: 18px; height: 18px; }
.s20 { width: 20px; height: 20px; }
.s22 { width: 22px; height: 22px; }
.s24 { width: 24px; height: 24px; }
.s30 { width: 30px; height: 30px; }
.s32 { width: 32px; height: 32px; }
.s36 { width: 36px; height: 36px; }

.titlebar {
  display: flex;
  align-items: center;
  flex: none;
  height: 53px;
  background: #3c3c3c;
}
.logo {
  margin: 0 15px 0 14px;
}
.menus {
  display: flex;
  gap: 1px;
  width: 500px;
}
.menus button {
  padding: 0 12px;
}
.menus button:last-child {
  padding-left: 16px;
}
.history {
  display: flex;
  gap: 20px;
  width: 80px;
}
.off {
  color: #858585;
}
.command {
  flex: 1;
  justify-content: center;
  gap: 8px;
  height: 35px;
  border: 1px solid #606060;
  border-radius: 9px;
  background: #464646;
}
.layouts {
  display: flex;
  gap: 17px;
  margin-left: 235px;
}
.window {
  display: flex;
  gap: 43px;
  margin: 0 22px 0 31px;
}

.workbench {
  display: flex;
  flex: 1;
  min-height: 0;
}
.activity {
  display: flex;
  flex-direction: column;
  align-items: center;
  gap: 36px;
  width: 72px;
  padding: 18px 0 2px;
  background: #333;
  color: #858585;
}
.activity button {
  justify-content: center;
  width: 36px;
  height: 36px;
}
.activity .current {
  color: #fff;
}
.tall {
  width: 36px;
  height: 44px;
}
.account {
  margin-top: auto;
}
.editor {
  display: flex;
  flex: 1;
  flex-direction: column;
  min-width: 0;
}
.tabbar {
  display: flex;
  justify-content: space-between;
  flex: none;
  height: 52px;
  background: #252526;
}
.tabs {
  display: grid;
  grid-template-columns: 290px 188px 179px 183px 291px 186px 217px;
}
.tab {
  gap: 8px;
  padding: 2px 0 0 20px;
  border-right: 1px solid #252526;
  background: #2d2d2d;
  color: #969696;
}
.tab .file {
  margin: 0 2px 4px 0;
}
.tab.active {
  background: #1e1e1e;
  color: #fff;
}
.tab.warn {
  color: #c9a50a;
}
.tab.preview {
  font-size: 19px;
  font-style: italic;
}
.note {
  font-size: 17px;
  opacity: 0.7;
}
.count {
  font-size: 18px;
}
.shut {
  margin-left: 6px;
}
.actions {
  display: flex;
  gap: 18px;
  padding-right: 22px;
  color: #c5c5c5;
}
.crumbs {
  display: flex;
  align-items: center;
  flex: none;
  gap: 9px;
  height: 33px;
  padding-left: 30px;
  color: #a0a0a0;
}
.chev {
  width: 12px;
  height: 20px;
}
.py {
  margin: 0 6px 0 2px;
}
.toolbar {
  z-index: 1;
  display: flex;
  align-items: center;
  flex: none;
  gap: 24px;
  height: 39px;
  padding: 0 20px 0 16px;
  box-shadow: 0 2px 4px #0009;
}
.toolbar button {
  gap: 9px;
}
.bar {
  width: 2px;
  height: 24px;
  margin: 0 -8px 0 -4px;
  background: #bbb;
}
.vars {
  position: relative;
  display: flex;
}
.vars i {
  position: absolute;
  inset: 5px 0 0;
  font: italic 13px/17px "Liberation Serif", serif;
  text-align: center;
}
.toolbar .kernel {
  margin-left: auto;
}

.notebook {
  display: flex;
  flex: 1;
  min-height: 0;
}
.sheet {
  flex: 1;
  min-width: 0;
  overflow: hidden;
  padding: 45px 9px 0 0;
}
h1 {
  margin: 0 0 42px 66px;
  font-size: 37px;
  font-weight: 400;
  line-height: 60px;
}
.prose {
  margin: 0 0 43px 66px;
  font-size: 24px;
  line-height: 40px;
}
.cell {
  display: flex;
  align-items: flex-end;
  height: 85px;
}
.exec {
  width: 66px;
  padding: 0 5px 5px 0;
  color: #969696;
  font: 14px/24px "DejaVu Sans Mono", monospace;
  text-align: right;
}
.code {
  display: flex;
  flex: 1;
  justify-content: space-between;
  height: 85px;
  padding: 19px 8px 5px 52px;
  border: 1px solid #37373d;
  background: #252526;
}
code {
  color: #d4d4d4;
  font: 19px/24px "DejaVu Sans Mono", monospace;
}
.lang {
  align-self: flex-end;
  font-size: 17px;
}
.output {
  display: flex;
  align-items: flex-start;
  margin-top: 13px;
}
.more {
  width: 79px;
  padding: 3px 0 0 24px;
}
table {
  width: 1546px;
  table-layout: fixed;
  border-collapse: collapse;
  font-size: 20px;
}
th,
td {
  height: 40px;
  padding: 2px 12px 0 0;
  text-align: right;
}
thead tr {
  background: #2d2d2d;
}
tbody tr:nth-child(even) {
  background: #262626;
}
.c1 { width: 69px; }
.c2 { width: 94px; }
.c3 { width: 60px; }
.c4 { width: 154px; }
.c5 { width: 157px; }
.c6 { width: 152px; }
.c7 { width: 159px; }
.c8 { width: 174px; }
.c9 { width: 199px; }
.c10 { width: 62px; }
.c11 { width: 181px; }
.c12 { width: 85px; }
.shape {
  margin: 24px 0 0;
  font-size: 20px;
}
.rail {
  width: 15px;
}
.thumb {
  height: 50px;
  margin-top: 500px;
  background: #424242;
}

.taskbar {
  display: flex;
  align-items: center;
  flex: none;
  height: 50px;
  background: #1f2d38;
  color: #fff;
}
.start {
  justify-content: center;
  align-self: stretch;
  width: 60px;
  background: #1e322f;
}
.find {
  display: flex;
  align-items: center;
  width: 360px;
  height: 50px;
  padding-left: 14px;
  border: 1px solid #666;
  background: #333;
}
.find input {
  flex: 1;
  min-width: 0;
  padding: 0 0 0 15px;
  border: 0;
  outline: 0;
  background: none;
  color: #ddd;
  font: inherit;
}
.find input::placeholder {
  color: #ddd;
}
.art {
  width: 97px;
  height: 44px;
  align-self: flex-end;
}
.view {
  margin: 0 22px 0 20px;
}
.app {
  position: relative;
  justify-content: center;
  width: 51px;
  height: 50px;
  margin: 0 5px 0 6px;
  border-bottom: 3px solid transparent;
  padding-top: 3px;
}
.app.open {
  border-color: #76b9ed;
}
.app.focused {
  align-self: flex-end;
  width: 60px;
  height: 46px;
  margin: 0 1px;
  padding: 0;
  background: #4c5963;
}
.glyph {
  position: absolute;
  font-size: 12px;
  line-height: 20px;
  text-align: center;
}
.glyph.chromev {
  inset: 21px 0 auto 22px;
  width: 20px;
}
.glyph.word {
  inset: 14px auto auto 10px;
  width: 18px;
  font-weight: 700;
}
.weather {
  gap: 11px;
  margin-left: auto;
  font-size: 17px;
}
.tray {
  display: flex;
  align-items: center;
  gap: 10px;
  margin-left: 30px;
}
.clock {
  display: flex;
  flex-direction: column;
  align-items: center;
  margin: 0 23px 0 15px;
  font-size: 14px;
}
.notify {
  height: 50px;
  margin-right: 5px;
  padding-right: 25px;
  border-right: 1px solid #6b757c;
}
</style>
